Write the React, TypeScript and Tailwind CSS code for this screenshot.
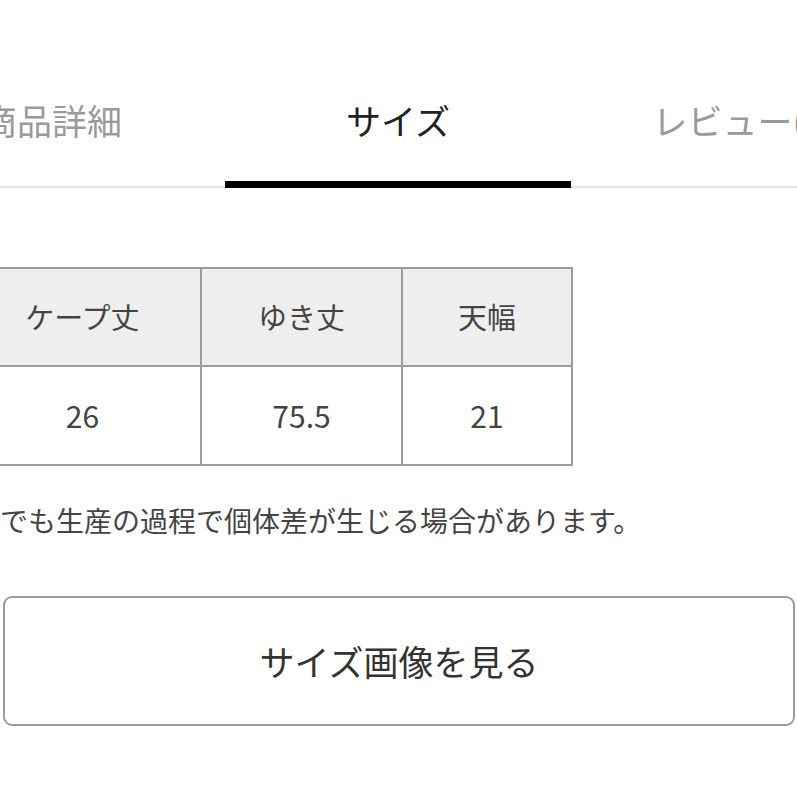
import React from 'react';

const font = { fontFamily: '"Noto Sans CJK JP", "Noto Sans", sans-serif' };

function Tab({ label, active }: { label: string; active?: boolean }) {
  return (
    <div className="flex w-[346px] shrink-0 flex-col">
      <div
        className={`flex h-[181px] items-center justify-center whitespace-nowrap pt-[57px] text-[35px] leading-none ${
          active ? 'text-[#222222]' : 'text-[#9a9a9a]'
        }`}
      >
        {label}
      </div>
      {active ? (
        <div className="h-[7px] bg-black" />
      ) : (
        <div className="h-[7px] border-b-2 border-[#e6e6e6]" />
      )}
    </div>
  );
}

const headers = ['ケープ丈', 'ゆき丈', '天幅'];
const values = ['26', '75.5', '21'];
const widths = ['w-[237px]', 'w-[201px]', 'w-[170px]'];

export default function App() {
  return (
    <div className="h-[797px] w-[797px] overflow-hidden bg-white" style={font}>
      <div className="ml-[-121px] flex">
        <Tab label="商品詳細" />
        <Tab label="サイズ" active />
        <Tab label="レビュー(0)" />
      </div>

      <div className="ml-[-37px] mt-[79px] flex w-max flex-col border-l-2 border-t-2 border-[#9c9c9c]">
        <div className="flex bg-[#eeeeee]">
          {headers.map((h, i) => (
            <div
              key={h}
              className={`${widths[i]} flex h-[98px] items-center justify-center border-b-2 border-r-2 border-[#9c9c9c] text-[29px] text-[#444444]`}
            >
              {h}
            </div>
          ))}
        </div>
        <div className="flex bg-white">
          {values.map((v, i) => (
            <div
              key={i}
              className={`${widths[i]} flex h-[99px] items-center justify-center border-b-2 border-r-2 border-[#9c9c9c] text-[30px] text-[#444444]`}
            >
              {v}
            </div>
          ))}
        </div>
      </div>

      <p className="mt-[34px] whitespace-nowrap text-[28px] leading-[40px] text-[#444444]">
        でも生産の過程で個体差が生じる場合があります。
      </p>

      <button className="mx-[3px] mt-[56px] flex h-[130px] w-[792px] items-center justify-center rounded-[9px] border-2 border-[#9c9c9c] bg-white text-[35px] text-[#333333]">
        サイズ画像を見る
      </button>
    </div>
  );
}
